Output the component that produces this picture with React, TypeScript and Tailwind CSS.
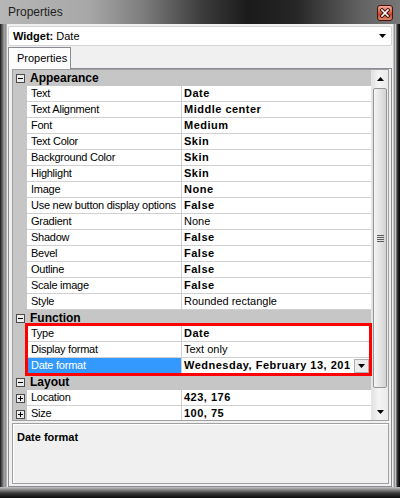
import React from 'react'

type Row = {
  name: string
  value: string
  bold?: boolean
  expand?: boolean
  selected?: boolean
}

type Section = { title: string; rows: Row[] }

const sections: Section[] = [
  {
    title: 'Appearance',
    rows: [
      { name: 'Text', value: 'Date', bold: true },
      { name: 'Text Alignment', value: 'Middle center', bold: true },
      { name: 'Font', value: 'Medium', bold: true },
      { name: 'Text Color', value: 'Skin', bold: true },
      { name: 'Background Color', value: 'Skin', bold: true },
      { name: 'Highlight', value: 'Skin', bold: true },
      { name: 'Image', value: 'None', bold: true },
      { name: 'Use new button display options', value: 'False', bold: true },
      { name: 'Gradient', value: 'None' },
      { name: 'Shadow', value: 'False', bold: true },
      { name: 'Bevel', value: 'False', bold: true },
      { name: 'Outline', value: 'False', bold: true },
      { name: 'Scale image', value: 'False', bold: true },
      { name: 'Style', value: 'Rounded rectangle' },
    ],
  },
  {
    title: 'Function',
    rows: [
      { name: 'Type', value: 'Date', bold: true },
      { name: 'Display format', value: 'Text only' },
      { name: 'Date format', value: 'Wednesday, February 13, 201', bold: true, selected: true },
    ],
  },
  {
    title: 'Layout',
    rows: [
      { name: 'Location', value: '423, 176', bold: true, expand: true },
      { name: 'Size', value: '100, 75', bold: true, expand: true },
    ],
  },
]

function ToggleBox({ minus }: { minus: boolean }) {
  return (
    <span className="relative block w-[9px] h-[9px] shrink-0 border border-[#4a4a4a] bg-[#ececec]">
      <span className="absolute left-[1px] right-[1px] top-[3px] h-px bg-black" />
      {!minus && <span className="absolute top-[1px] bottom-[1px] left-[3px] w-px bg-black" />}
    </span>
  )
}

function Arrow({ up }: { up?: boolean }) {
  return (
    <svg width="7" height="4" viewBox="0 0 7 4">
      <path d={up ? 'M0 4 L3.5 0 L7 4 Z' : 'M0 0 L7 0 L3.5 4 Z'} fill="#000" />
    </svg>
  )
}

function PropRow({ row }: { row: Row }) {
  return (
    <div className="flex h-4 shrink-0">
      <div className="w-[14px] shrink-0 bg-[#c6c6c6] flex items-center pl-[3px]">
        {row.expand && <ToggleBox minus={false} />}
      </div>
      <div
        className={
          row.selected
            ? 'w-[155px] shrink-0 border-b border-r border-[#d0d0d0] bg-[#3399ff] text-white pl-[4px] leading-[15px] tracking-[-0.25px] whitespace-nowrap'
            : 'w-[155px] shrink-0 border-b border-r border-[#d0d0d0] bg-white text-black pl-[4px] leading-[15px] tracking-[-0.25px] whitespace-nowrap'
        }
      >
        {row.name}
      </div>
      <div className="flex-1 min-w-0 flex border-b border-[#d0d0d0] bg-white pl-[2px]">
        <span
          className={
            row.bold
              ? 'flex-1 min-w-0 whitespace-nowrap font-bold leading-[15px] tracking-[0.5px]'
              : 'flex-1 min-w-0 whitespace-nowrap leading-[15px]'
          }
        >
          {row.value}
        </span>
        {row.selected && (
          <span className="w-[15px] h-[14px] mt-px mr-[2px] shrink-0 flex items-center justify-center bg-[#ececec] border border-[#b0b0b0]">
            <Arrow />
          </span>
        )}
      </div>
    </div>
  )
}

function CategoryRow({ title }: { title: string }) {
  return (
    <div className="flex h-4 shrink-0 items-center bg-[#c6c6c6] pl-[3px]">
      <ToggleBox minus />
      <span className="ml-[5px] text-[12px] font-bold leading-4 text-black">{title}</span>
    </div>
  )
}

function Scrollbar() {
  return (
    <div className="w-[17px] shrink-0 flex flex-col bg-[linear-gradient(90deg,#e2e2e2,#f4f4f4_40%,#eaeaea)] border-l border-[#e6e6e6]">
      <div className="h-[17px] shrink-0 flex items-center justify-center">
        <Arrow up />
      </div>
      <div className="flex-1 px-px pt-px">
        <div className="h-[300px] rounded-[2px] border border-[#979797] bg-[linear-gradient(90deg,#f4f4f4,#e6e6e6_45%,#d2d2d2)] flex flex-col items-center justify-center gap-px">
          <span className="w-[7px] h-px bg-[#5a5a5a]" />
          <span className="w-[7px] h-px bg-[#5a5a5a]" />
          <span className="w-[7px] h-px bg-[#5a5a5a]" />
          <span className="w-[7px] h-px bg-[#5a5a5a]" />
        </div>
      </div>
      <div className="h-[17px] shrink-0 flex items-center justify-center">
        <Arrow />
      </div>
    </div>
  )
}

export default function App() {
  return (
    <div className="w-[400px] h-[498px] flex flex-col bg-black font-['Liberation_Sans',Tahoma,Arial,sans-serif] text-[11px] text-black select-none">
      {/* title bar */}
      <div className="h-[24px] shrink-0 flex items-start justify-between bg-[linear-gradient(90deg,#b6b6b6_0%,#a8a8a8_22%,#7c7c7c_36%,#3e3e3e_50%,#1a1a1a_62%,#262626_74%,#626262_90%,#777777_100%)]">
        <span className="ml-[8px] mt-[4px] text-[12px] leading-[16px] text-[#1e1e1e]">Properties</span>
        <button className="mt-[5px] mr-[7px] w-[16px] h-[16px] rounded-[3px] border border-[#4a1208] bg-[linear-gradient(180deg,#eeaa96_0%,#d6604a_45%,#c0402a_60%,#e08a70_100%)] flex items-center justify-center">
          <svg width="10" height="10" viewBox="0 0 10 10">
            <path d="M2 2 L8 8 M8 2 L2 8" stroke="#3a0e06" strokeWidth="3.4" strokeLinecap="square" />
            <path d="M2 2 L8 8 M8 2 L2 8" stroke="#fff" strokeWidth="1.6" strokeLinecap="square" />
          </svg>
        </button>
      </div>

      <div className="flex flex-1 min-h-0">
        <div className="w-[7px] shrink-0 bg-[linear-gradient(90deg,#1a1a1a_0%,#5c5c5c_30%,#a4a4a4_60%,#8a8a8a_85%,#d8d8d8_100%)]" />

        {/* client area */}
        <div className="w-[386px] shrink-0 flex flex-col bg-[#f0f0f0]">
          {/* widget selector */}
          <div className="mt-[2px] mx-px h-[20px] shrink-0 flex items-center justify-between rounded-[2px] border border-[#d4d4d4] bg-white pl-[4px] pr-[5px]">
            <span>
              <span className="font-bold">Widget:</span> Date
            </span>
            <Arrow />
          </div>

          {/* tab strip */}
          <div className="h-[22px] shrink-0 flex items-end pl-px">
            <div className="relative z-10 -mb-px h-[22px] w-[63px] border border-b-0 border-[#898c95] bg-[#fcfcfc] pl-[8px] leading-[20px]">
              Properties
            </div>
          </div>

          {/* tab panel */}
          <div className="mx-px flex-1 flex flex-col gap-[2px] border border-[#898c95] bg-[#f0f0f0] pl-[3px] pr-[2px] pb-[2px]">
            {/* property grid */}
            <div className="relative h-[352px] shrink-0 flex border border-[#a0a0a0] bg-white overflow-hidden">
              <div className="flex-1 min-w-0 flex flex-col overflow-hidden">
                {sections.map((s) => (
                  <React.Fragment key={s.title}>
                    <CategoryRow title={s.title} />
                    {s.rows.map((r) => (
                      <PropRow key={r.name} row={r} />
                    ))}
                  </React.Fragment>
                ))}
              </div>
              <Scrollbar />
              {/* red highlight annotation */}
              <div className="absolute left-[12px] top-[253px] w-[347px] h-[53px] border-[3px] border-[#ff0000] pointer-events-none" />
            </div>

            {/* description pane */}
            <div className="flex-1 border border-[#a0a0a0] shadow-[inset_1px_1px_0_#ffffff] bg-[#f0f0f0] pl-[4px] pt-[5px]">
              <span className="font-bold">Date format</span>
            </div>
          </div>
        </div>

        <div className="w-[7px] shrink-0 bg-[linear-gradient(90deg,#e0e0e0_0%,#8c8c8c_20%,#c8c8c8_35%,#3a3a3a_60%,#000000_100%)]" />
      </div>

      <div className="h-[11px] shrink-0 bg-[linear-gradient(180deg,#c4c4c4_0%,#8a8a8a_25%,#3a3a3a_55%,#0a0a0a_100%)]" />
    </div>
  )
}
